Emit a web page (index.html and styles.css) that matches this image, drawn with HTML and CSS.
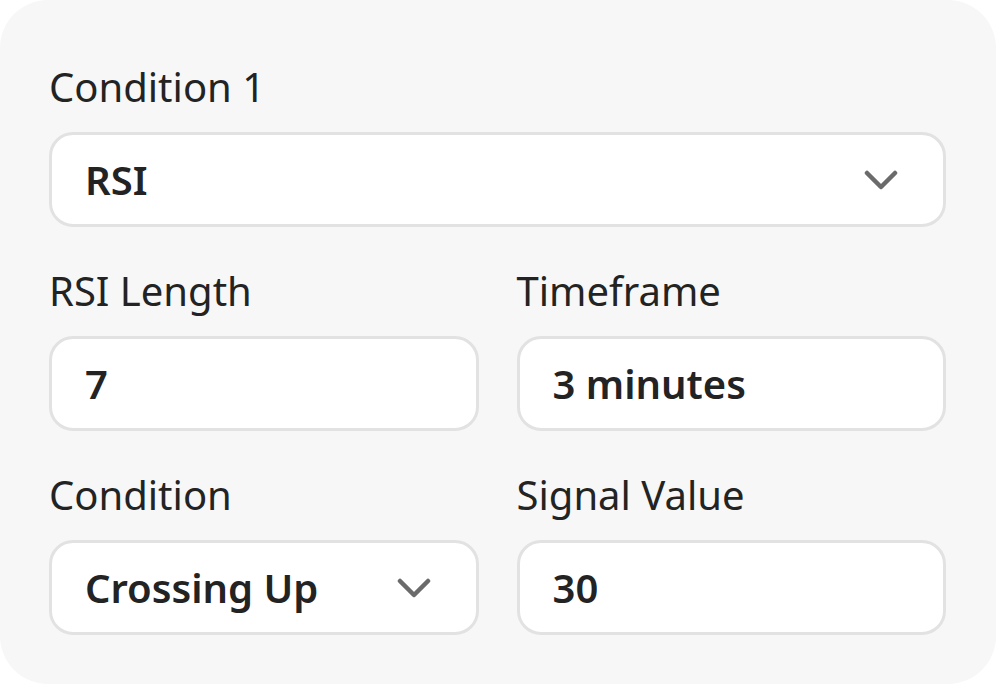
FILE: index.html
```html
<!DOCTYPE html>
<html lang="en">
<head>
<meta charset="utf-8">
<title>Condition 1</title>
<link rel="stylesheet" href="styles.css">
</head>
<body>
<div class="card">
  <div class="form">
    <div class="field field-wide">
      <div class="label">Condition 1</div>
      <div class="control">
        <span class="value">RSI</span>
        <svg class="chevron" width="34" height="20" viewBox="0 0 34 20"><path d="M3 3 L17 17 L31 3" fill="none" stroke="#6b6b6b" stroke-width="4.5" stroke-linecap="round" stroke-linejoin="round"/></svg>
      </div>
    </div>
    <div class="field">
      <div class="label">RSI Length</div>
      <div class="control"><span class="value">7</span></div>
    </div>
    <div class="field">
      <div class="label">Timeframe</div>
      <div class="control"><span class="value">3 minutes</span></div>
    </div>
    <div class="field">
      <div class="label">Condition</div>
      <div class="control">
        <span class="value">Crossing Up</span>
        <svg class="chevron" width="34" height="20" viewBox="0 0 34 20"><path d="M3 3 L17 17 L31 3" fill="none" stroke="#6b6b6b" stroke-width="4.5" stroke-linecap="round" stroke-linejoin="round"/></svg>
      </div>
    </div>
    <div class="field">
      <div class="label">Signal Value</div>
      <div class="control"><span class="value">30</span></div>
    </div>
  </div>
</div>
</body>
</html>
```
FILE: styles.css
```css
html, body {
  margin: 0;
  padding: 0;
  background: #ffffff;
}
body {
  font-family: "Noto Sans", "Open Sans", sans-serif;
  color: #232323;
}
.card {
  width: 996px;
  height: 684px;
  box-sizing: border-box;
  background: #f7f7f7;
  border-radius: 48px;
  padding: 59px 50px 0 49px;
  overflow: hidden;
}
.form {
  display: grid;
  grid-template-columns: 1fr 1fr;
  column-gap: 38px;
  row-gap: 36px;
}
.field-wide {
  grid-column: 1 / span 2;
}
.label {
  font-size: 40px;
  line-height: normal;
  font-weight: 400;
  color: #232323;
  margin-bottom: 18px;
}
.control {
  height: 95px;
  box-sizing: border-box;
  background: #ffffff;
  border: 3px solid #e2e2e2;
  border-radius: 24px;
  display: flex;
  align-items: center;
  justify-content: space-between;
  padding: 0 45px 0 33px;
}
.value {
  font-size: 40px;
  line-height: normal;
  font-weight: 600;
  color: #232323;
}
.chevron {
  display: block;
  flex: none;
}
```
